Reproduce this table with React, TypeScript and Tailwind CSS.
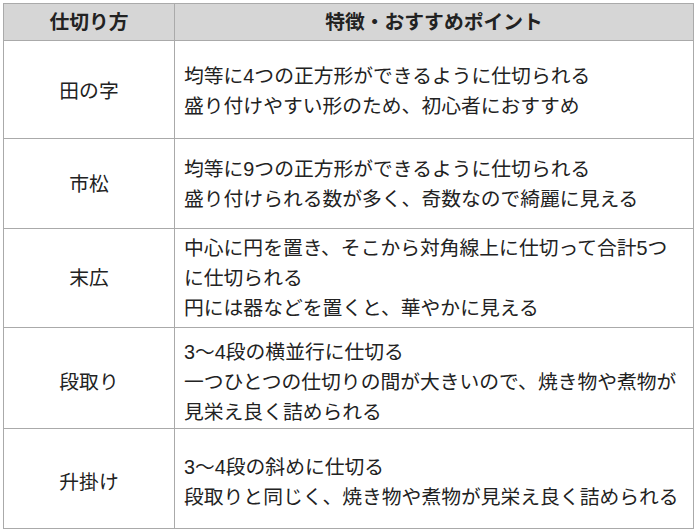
const rows = [
  {
    name: "田の字",
    lines: ["均等に4つの正方形ができるように仕切られる", "盛り付けやすい形のため、初心者におすすめ"],
    h: "h-[98px]",
    pad: "pt-[2px]",
  },
  {
    name: "市松",
    lines: ["均等に9つの正方形ができるように仕切られる", "盛り付けられる数が多く、奇数なので綺麗に見える"],
    h: "h-[90px]",
    pad: "pt-[1px]",
  },
  {
    name: "末広",
    lines: [
      "中心に円を置き、そこから対角線上に仕切って合計5つ",
      "に仕切られる",
      "円には器などを置くと、華やかに見える",
    ],
    h: "h-[99px]",
    pad: "pt-0",
  },
  {
    name: "段取り",
    lines: [
      "3〜4段の横並行に仕切る",
      "一つひとつの仕切りの間が大きいので、焼き物や煮物が",
      "見栄え良く詰められる",
    ],
    h: "h-[101px]",
    pad: "pt-[7px]",
  },
  {
    name: "升掛け",
    lines: ["3〜4段の斜めに仕切る", "段取りと同じく、焼き物や煮物が見栄え良く詰められる"],
    h: "h-[100px]",
    pad: "pt-[6px]",
  },
]

export default function App() {
  return (
    <div
      className="h-[532px] w-[698px] bg-white pl-[3px] pt-[3px] text-[#222]"
      style={{ fontFamily: '"Liberation Sans", "Noto Sans CJK JP", sans-serif' }}
    >
      <table className="w-[691px] border-collapse text-[19.8px] leading-[30px]">
        <thead>
          <tr className="h-[37px] bg-[#d6d6d6]">
            <th className="w-[171px] border border-[#aaa] text-center font-bold">仕切り方</th>
            <th className="border border-[#aaa] text-center font-bold">特徴・おすすめポイント</th>
          </tr>
        </thead>
        <tbody>
          {rows.map((row) => (
            <tr key={row.name} className={row.h}>
              <td className={`border border-[#aaa] text-center align-middle ${row.pad}`}>{row.name}</td>
              <td className={`whitespace-nowrap border border-[#aaa] pl-[9px] align-middle ${row.pad}`}>
                {row.lines.map((line) => (
                  <div key={line}>{line}</div>
                ))}
              </td>
            </tr>
          ))}
        </tbody>
      </table>
    </div>
  )
}
